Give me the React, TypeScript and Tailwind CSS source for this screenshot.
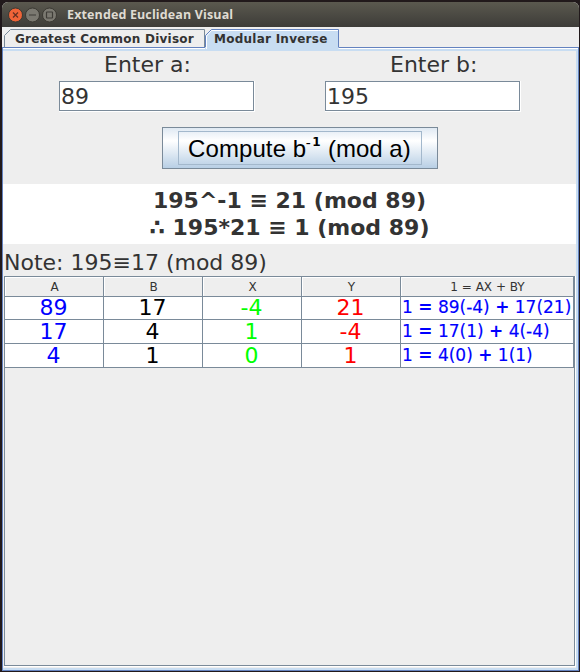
import React from "react";

const line = "border-[#7a8a99]";

function Field({ label, value, left, indent }: { label: string; value: string; left: string; indent: string }) {
  return (
    <div className={`w-[196px] ${left}`}>
      <div className={`h-[30px] text-[22px] leading-[28px] whitespace-pre ${indent}`}>{label}</div>
      <div className="h-[31px] border-r border-b border-white">
        <div className={`h-[30px] border ${line} bg-white pl-px text-[22px] leading-[29px]`}>{value}</div>
      </div>
    </div>
  );
}

function Formula({ text }: { text: string }) {
  return (
    <>
      {text.split(/([=+])/).map((part, i) => (
        <span key={i} className={i % 2 ? "font-bold" : "[-webkit-text-stroke:0.15px_#0000ff]"}>{part}</span>
      ))}
    </>
  );
}

const rows = [
  ["89", "17", "-4", "21", "1 = 89(-4) + 17(21)"],
  ["17", "4", "1", "-4", "1 = 17(1) + 4(-4)"],
  ["4", "1", "0", "1", "1 = 4(0) + 1(1)"],
];
const colors = ["text-[#0000ff]", "text-black", "text-[#00ff00]", "text-[#ff0000]"];
const grid = "grid grid-cols-[99px_99px_99px_99px_173px]";

export default function App() {
  return (
    <div className="h-[672px] w-[580px] overflow-hidden bg-[#21191b] pt-[2px] pr-[1px] pb-[1px] pl-[2px] font-['DejaVu_Sans','Liberation_Sans',sans-serif] text-[#333333]">
      <div className="flex h-[669px] w-[577px] flex-col overflow-hidden rounded-t-[6px] bg-[#eeeeee]">
        <header className="flex h-[25px] shrink-0 items-center bg-linear-to-b from-[#5b594f] to-[#3d3c38] pl-[6px]">
          <svg width="52" height="20" viewBox="0 0 52 20" fill="none">
            <circle cx="7.5" cy="10" r="7" fill="#ef6438" stroke="#3b3933" />
            <path d="M5 7.5l5 5m0-5l-5 5" stroke="#633022" strokeWidth="1.2" />
            <circle cx="24.5" cy="10" r="7" fill="#7b7971" stroke="#3b3933" />
            <path d="M21 10h7" stroke="#3f3d38" strokeWidth="1.2" />
            <circle cx="41.5" cy="10" r="7" fill="#7b7971" stroke="#3b3933" />
            <rect x="38.5" y="7" width="6" height="6" rx=".5" stroke="#3f3d38" strokeWidth="1.2" />
          </svg>
          <h1 className="ml-[7px] pt-[2px] font-['Open_Sans','Noto_Sans',sans-serif] text-[12.5px] font-bold tracking-[0.13px] whitespace-nowrap text-[#dfdbd2]">Extended Euclidean Visual</h1>
        </header>

        <nav className="flex h-[20px] shrink-0 items-end pl-[2px]">
          <div className="relative h-[18px] w-[201px] pl-[11px] text-[12px] leading-[20px] font-bold tracking-[0.25px] whitespace-nowrap">
            <svg className="absolute inset-0" width="201" height="18" fill="none"><path d="M.5 18V6.5l6-6H200.5V18" stroke="#7a8a99" /></svg>
            <span className="relative">Greatest Common Divisor</span>
          </div>
          <div className="relative z-10 h-[18px] w-[134px] pl-[9px] text-[12px] leading-[20px] font-bold tracking-[0.25px] whitespace-nowrap">
            <svg className="absolute top-0 left-0" width="134" height="22" fill="none"><path d="M0 22V6.5l6-6H133.5V22z" fill="#c8ddf2" /><path d="M.5 18V6.5l6-6H133.5V18" stroke="#6382bf" /><path d="M1.5 20V7l5-5.5H133" stroke="#fff" /></svg>
            <span className="relative">Modular Inverse</span>
          </div>
        </nav>

        <main className="flex min-h-0 flex-1 flex-col border border-[#6382bf]">
          <div className="flex min-h-0 flex-1 flex-col border-t border-white">
            <div className="flex min-h-0 flex-1 flex-col border-t-2 border-r-2 border-b-2 border-[#c8ddf2]">
              <section className="flex h-[76px] shrink-0">
                <Field label="Enter a:" value="89" left="ml-[56px]" indent="pl-[45px]" />
                <Field label="Enter b:" value="195" left="ml-[70px]" indent="pl-[65px]" />
              </section>
              <section className="flex h-[57px] shrink-0 pl-[159px]">
                <button className="flex h-[42px] w-[276px] items-center justify-center border border-[#7a8a99] bg-[linear-gradient(to_bottom,#dfe9f3,#ffffff_32%,#b8cfe5)]">
                  <span className="flex h-[34px] w-[244px] items-center border border-[#a3b8cc] pt-px pl-[9px] font-['Liberation_Sans',Arial,sans-serif] text-[24px] leading-[32px] whitespace-pre text-black">
                    <span className="tracking-[0.1px]">Compute b</span>
                    <span className="-ml-px h-[32px] w-[6px] text-[15px] leading-[19px]">-</span>
                    <span className="h-[32px] w-[10px] font-['DejaVu_Sans'] text-[12px] leading-[19px] font-bold">1</span>
                    <span> (mod a)</span>
                  </span>
                </button>
              </section>
              <section className="h-[60px] shrink-0 bg-white pt-[3px] text-center text-[22px] leading-[27px] font-bold whitespace-pre">
                <p>195^-1 ≡ 21 (mod 89)</p>
                <p>∴ 195*21 ≡ 1 (mod 89)</p>
              </section>
              <section className="flex min-h-0 flex-1 flex-col pl-px">
                <p className="h-[32px] shrink-0 pt-[5px] text-[22px] leading-[28px] whitespace-pre">Note: 195≡17 (mod 89)</p>
                <div className="mb-px min-h-0 flex-1 border-r border-b border-white">
                  <div className={`h-full border ${line}`}>
                    <div className={`${grid} h-[19px] w-[569px] text-[12px]`}>
                      {["A", "B", "X", "Y", "1 = AX + BY"].map((h) => (
                        <div key={h} className={`border-r border-b ${line}`}>
                          <div className="h-full border-t border-l border-white text-center leading-[18px]">{h}</div>
                        </div>
                      ))}
                    </div>
                    {rows.map((r) => (
                      <div key={r[4]} className={`${grid} h-[24px] w-[569px] bg-white text-[22px]`}>
                        {colors.map((c, i) => (
                          <div key={c} className={`border-r border-b ${line} ${c} pr-px text-center leading-[23px]`}>{r[i]}</div>
                        ))}
                        <div className={`border-r border-b ${line} overflow-hidden pl-px text-[17px] leading-[23px] whitespace-pre text-[#0000ff]`}>
                          <Formula text={r[4]} />
                        </div>
                      </div>
                    ))}
                  </div>
                </div>
              </section>
            </div>
          </div>
        </main>
      </div>
    </div>
  );
}
